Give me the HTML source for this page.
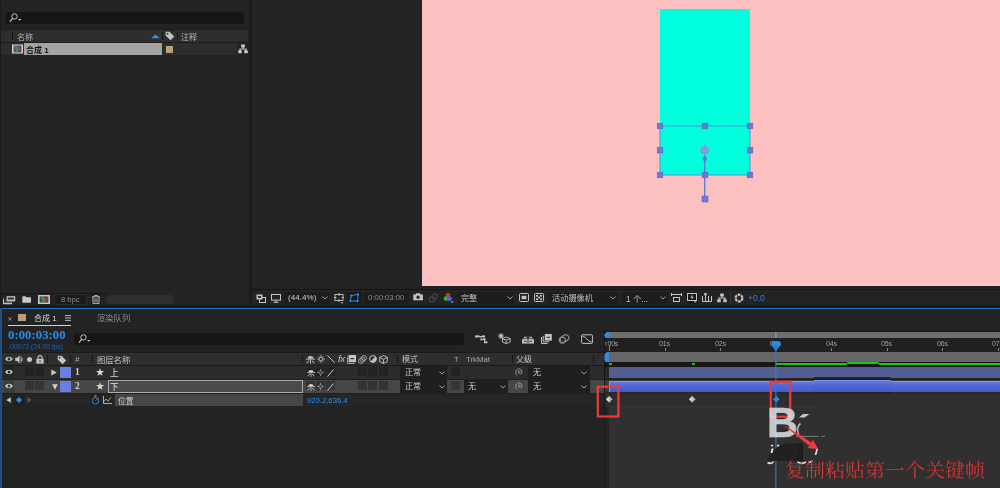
<!DOCTYPE html>
<html lang="zh-CN">
<head>
<meta charset="utf-8">
<title>After Effects</title>
<style>
html,body{margin:0;padding:0;}
body{width:1000px;height:488px;overflow:hidden;background:#232323;position:relative;
 font-family:"Liberation Sans","Noto Sans CJK SC",sans-serif;color:#bdbdbd;font-size:8.3px;}
.a{position:absolute;}
.t{position:absolute;white-space:nowrap;line-height:12px;height:12px;will-change:transform;}
.box{position:absolute;background:#1d1d1d;border-radius:2px;}
svg{position:absolute;overflow:visible;}
.sep{position:absolute;width:1px;background:#161616;}
.ruler{top:338px;font-size:7px;color:#a0a0a0;letter-spacing:-0.200px;}
.tick{top:348px;width:1px;height:3px;background:#858585;}
</style>
</head>
<body>

<!-- ===================== PROJECT PANEL ===================== -->
<div class="a" id="proj" style="left:0;top:0;width:248px;height:306px;background:#232323;"></div>
<div class="a" style="left:0;top:0;width:1px;height:306px;background:#1b1b1b;"></div>
<!-- search -->
<div class="box" style="left:6px;top:12px;width:238px;height:12px;background:#161616;"></div>
<svg style="left:9px;top:13px" width="14" height="10" viewBox="0 0 14 10"><circle cx="5.500" cy="3.400" r="2.700" fill="none" stroke="#c8c8c8" stroke-width="1"/><path d="M3.600 5.400L0.900 8.600" stroke="#c8c8c8" stroke-width="1.200"/><path d="M9 6h3.400l-1.700 1.700z" fill="#c8c8c8"/></svg>
<!-- header -->
<div class="a" style="left:0;top:29px;width:248px;height:1px;background:#1a1a1a;"></div>
<div class="a" style="left:1px;top:30px;width:247px;height:12px;background:#2e2e2e;"></div>
<div class="a" style="left:0;top:42px;width:248px;height:1px;background:#1c1c1c;"></div>
<div class="sep" style="left:12px;top:32px;height:8px;"></div>
<div class="sep" style="left:162px;top:32px;height:8px;"></div>
<div class="sep" style="left:177px;top:32px;height:8px;"></div>
<div class="t" style="left:17px;top:31.5px;font-size:8px;color:#b4b4b4;">名称</div>
<svg style="left:151px;top:34px" width="9" height="5" viewBox="0 0 9 5"><path d="M0 4.2L4.5 0.4L9 4.2z" fill="#2d8ceb"/></svg>
<svg style="left:165px;top:31px" width="10" height="10" viewBox="0 0 10 10"><path d="M0.6 0.8h3.8l4.8 4.8l-3.6 3.6l-5-4.8z" fill="#c4c4c4"/><circle cx="2.5" cy="2.7" r="0.9" fill="#2e2e2e"/></svg>
<div class="t" style="left:181px;top:31.5px;font-size:8px;color:#b4b4b4;">注释</div>
<!-- row -->
<div class="a" style="left:1px;top:43px;width:236px;height:12px;background:#2d2d2d;"></div>
<div class="a" style="left:24px;top:43px;width:138px;height:12px;background:#a3a3a3;"></div>
<svg style="left:12px;top:44px" width="11" height="10" viewBox="0 0 11 10"><rect x="0" y="0.5" width="11" height="9" fill="#cfcfcf"/><rect x="1.6" y="1.6" width="7.8" height="6.8" fill="#4a4a4a"/><circle cx="4.2" cy="3.6" r="1.6" fill="#3b7be0"/><circle cx="7" cy="4.6" r="1.6" fill="#d83030"/><circle cx="5" cy="6.4" r="1.6" fill="#2da040"/></svg>
<div class="t" style="left:26px;top:44.5px;font-size:8px;color:#111;font-weight:bold;">合成 1</div>
<div class="a" style="left:166.200px;top:46px;width:6.900px;height:6.700px;background:#baa17c;"></div>
<svg style="left:238px;top:44px" width="10" height="10" viewBox="0 0 10 10"><g fill="#d0d0d0"><rect x="3.2" y="0.5" width="3.6" height="3"/><rect x="0.3" y="6.2" width="3.4" height="3"/><rect x="6.3" y="6.2" width="3.4" height="3"/><rect x="4.6" y="3" width="0.9" height="2.2"/><rect x="1.6" y="4.6" width="6.8" height="0.9"/><rect x="1.6" y="4.6" width="0.9" height="2"/><rect x="7.5" y="4.6" width="0.9" height="2"/></g></svg>
<!-- footer -->
<div class="a" style="left:0;top:293px;width:105px;height:1px;background:#161616;"></div>
<div class="box" style="left:54px;top:294px;width:33px;height:11px;background:#1b1b1b;border:1px solid #2c2c2c;box-sizing:border-box;"></div>
<div class="t" style="left:61.300px;top:293.5px;font-size:7.600px;color:#868c94;">8 bpc</div>
<div class="a" style="left:106px;top:295px;width:68px;height:9px;border-radius:5px;background:#2f2f2f;"></div>

<!-- ===================== DIVIDER + VIEWER ===================== -->
<div class="a" style="left:249px;top:0;width:3px;height:306px;background:#1b1b1b;"></div>
<div class="a" style="left:252px;top:0;width:748px;height:288px;background:#232323;"></div>
<div class="a" id="pink" style="left:422px;top:0;width:578px;height:286px;background:#fdc0c0;"></div>
<div class="a" id="cyan" style="left:660px;top:9px;width:89.5px;height:166px;background:#00ffdc;"></div>
<svg style="left:640px;top:110px" width="130" height="100" viewBox="640 110 130 100">
 <g stroke="#5f76d8" stroke-width="0.800" fill="none"><rect x="660" y="126" width="90" height="49"/><path d="M704.700 153V199" stroke-width="1.300"/></g>
 <g fill="#6c79d8" stroke="#5560b8" stroke-width="0.5">
  <rect x="657.2" y="123.2" width="5.6" height="5.6"/><rect x="702.2" y="123.2" width="5.6" height="5.6"/><rect x="747.2" y="123.2" width="5.6" height="5.6"/>
  <rect x="657.2" y="147.4" width="5.6" height="5.6"/><rect x="747.2" y="147.4" width="5.6" height="5.6"/>
  <rect x="657.2" y="172.2" width="5.6" height="5.6"/><rect x="702.2" y="172.2" width="5.6" height="5.6"/><rect x="747.2" y="172.2" width="5.6" height="5.6"/>
  <rect x="702" y="196" width="6" height="6"/>
  <circle cx="704.700" cy="158.800" r="1.900"/>
 </g>
 <g stroke="#9090d8" fill="none"><circle cx="704.700" cy="150.200" r="3" stroke-width="1.900"/><path d="M704.700 144.600v11.200M699.100 150.200h11.200" stroke-width="1"/></g>
</svg>

<!-- viewer bottom bar -->
<div class="a" style="left:252px;top:288.500px;width:748px;height:1px;background:#151515;"></div>

<div class="a" style="left:0;top:305.400px;width:1000px;height:3px;background:#191919;"></div>
<div class="a" style="left:0;top:308px;width:1000px;height:1.600px;background:#2474c4;"></div>


<!-- project footer icons -->
<svg style="left:3px;top:295.500px" width="13" height="9" viewBox="0 0 13 9"><rect x="3.600" y="0.200" width="8.600" height="5.200" fill="#c4c4c4"/><rect x="4.800" y="1.400" width="6.200" height="2.200" fill="#3a3a3a"/><path d="M0.600 2.600v5h8.400" fill="none" stroke="#c4c4c4" stroke-width="1.100"/><path d="M2 6.200h7.500" stroke="#8a8a8a" stroke-width="0.800"/></svg>
<svg style="left:22px;top:295.500px" width="9.500" height="7" viewBox="0 0 10 8"><path d="M0 0.300h3.600l0.800 1.200H9.800V7.800H0z" fill="#c8c8c8"/></svg>
<svg style="left:38px;top:295px" width="12" height="9" viewBox="0 0 12 9"><rect x="0" y="0" width="12" height="9" fill="#c8c8c8"/><rect x="1.6" y="1.4" width="8.8" height="6.2" fill="#4a4a4a"/><circle cx="4.8" cy="3.4" r="1.6" fill="#3b7be0"/><circle cx="7.4" cy="4.4" r="1.6" fill="#d83030"/><circle cx="5.4" cy="6" r="1.6" fill="#2da040"/></svg>
<svg style="left:92px;top:295px" width="8" height="9" viewBox="0 0 8 9"><g fill="none" stroke="#c4c4c4" stroke-width="0.9"><path d="M0 1.8h8M2.6 1.6V0.5h2.8v1.1M1 2v6.4h6V2M3 3.4v3.8M5 3.4v3.8"/></g></svg>

<!-- viewer bar controls -->
<svg style="left:256px;top:294px" width="10" height="9" viewBox="0 0 10 9"><rect x="0.5" y="0.5" width="6" height="5" fill="#c4c4c4"/><rect x="3.5" y="3.5" width="6" height="5" fill="none" stroke="#c4c4c4"/><rect x="2" y="2" width="3" height="2" fill="#333"/></svg>
<svg style="left:271px;top:294px" width="10" height="9" viewBox="0 0 10 9"><rect x="0.5" y="0.5" width="9" height="5.6" fill="none" stroke="#c4c4c4"/><path d="M5 6v2M2.5 8.3h5" stroke="#c4c4c4" stroke-width="1"/></svg>
<div class="box" style="left:284px;top:292px;width:46px;height:12px;"></div>
<div class="t" style="left:288px;top:292px;font-size:8.100px;color:#cacaca;">(44.4%)</div>
<svg style="left:322px;top:296px" width="6" height="4" viewBox="0 0 6 4"><path d="M0.4 0.5L3 3L5.6 0.5" fill="none" stroke="#b0b0b0" stroke-width="0.9"/></svg>
<svg style="left:334px;top:293px" width="10" height="11" viewBox="0 0 10 11"><g fill="none" stroke="#c4c4c4" stroke-width="0.9"><rect x="1" y="1.5" width="8" height="6"/><path d="M5 0v3M5 6v3M0 4.5h2.5M7.5 4.5H10"/></g><path d="M6.5 9.2h3l-1.5 1.5z" fill="#c4c4c4"/></svg>
<div class="box" style="left:348px;top:292px;width:13px;height:12px;background:#181818;"></div>
<svg style="left:349px;top:293px" width="11" height="10" viewBox="0 0 11 10"><path d="M2.2 2.6L9 1.4L8.6 8H1.4z" fill="none" stroke="#2d8ceb" stroke-width="1"/><g fill="#2d8ceb"><rect x="1.2" y="1.6" width="2" height="2"/><rect x="8" y="0.4" width="2" height="2"/><rect x="7.6" y="7" width="2" height="2"/><rect x="0.4" y="7" width="2" height="2"/></g></svg>
<div class="box" style="left:364px;top:292px;width:45px;height:12px;"></div>
<div class="t" style="left:368px;top:292px;font-size:7.700px;color:#8c8c8c;">0:00:03:00</div>
<svg style="left:412.800px;top:293.400px" width="10.200" height="7.600" viewBox="0 0 11 8"><path d="M0.3 1.6h2.4l0.9-1.3h3.8l0.9 1.3h2.4V7.8H0.3z" fill="#c4c4c4"/><circle cx="5.5" cy="4.5" r="1.8" fill="#2a2a2a"/></svg>
<svg style="left:428px;top:293px" width="11" height="10" viewBox="0 0 11 10"><g fill="none" stroke="#444" stroke-width="1.2"><circle cx="6.8" cy="3.4" r="2.6"/><circle cx="3.8" cy="6.4" r="2.6"/></g></svg>
<svg style="left:443px;top:292px" width="11" height="12" viewBox="0 0 11 12"><circle cx="5" cy="3.4" r="2.3" fill="#e03030"/><circle cx="3" cy="6.6" r="2.3" fill="#30b040"/><circle cx="6.6" cy="6.8" r="2.3" fill="#3b6be8"/><path d="M7.6 9.6h3l-1.5 1.5z" fill="#c4c4c4"/></svg>
<div class="box" style="left:457px;top:292px;width:57px;height:12px;"></div>
<div class="t" style="left:461px;top:293px;font-size:8px;color:#c0c0c0;">完整</div>
<svg style="left:507px;top:296px" width="6" height="4" viewBox="0 0 6 4"><path d="M0.4 0.5L3 3L5.6 0.5" fill="none" stroke="#b0b0b0" stroke-width="0.9"/></svg>
<svg style="left:519px;top:293px" width="10" height="9" viewBox="0 0 10 9"><rect x="0.5" y="0.5" width="9" height="8" rx="1" fill="none" stroke="#c4c4c4"/><rect x="2.6" y="2.8" width="4.8" height="3.4" fill="#c4c4c4"/></svg>
<svg style="left:534px;top:293px" width="10" height="9" viewBox="0 0 10 9"><rect x="0.5" y="0.5" width="9" height="8" rx="1" fill="none" stroke="#c4c4c4"/><g fill="#c4c4c4"><rect x="2" y="2" width="2" height="1.7"/><rect x="6" y="2" width="2" height="1.7"/><rect x="4" y="3.7" width="2" height="1.7"/><rect x="2" y="5.4" width="2" height="1.7"/><rect x="6" y="5.4" width="2" height="1.7"/></g></svg>
<div class="box" style="left:548px;top:292px;width:70px;height:12px;"></div>
<div class="t" style="left:552px;top:293px;font-size:8.2px;color:#c0c0c0;">活动摄像机</div>
<svg style="left:610px;top:296px" width="6" height="4" viewBox="0 0 6 4"><path d="M0.4 0.5L3 3L5.6 0.5" fill="none" stroke="#b0b0b0" stroke-width="0.9"/></svg>
<div class="box" style="left:622px;top:292px;width:46px;height:12px;"></div>
<div class="t" style="left:626px;top:292.600px;font-size:8.3px;color:#c0c0c0;">1 个...</div>
<svg style="left:660px;top:296px" width="6" height="4" viewBox="0 0 6 4"><path d="M0.4 0.5L3 3L5.6 0.5" fill="none" stroke="#b0b0b0" stroke-width="0.9"/></svg>
<svg style="left:671px;top:293px" width="11" height="9" viewBox="0 0 11 9"><g fill="none" stroke="#c4c4c4" stroke-width="1"><path d="M0.5 0v3M10.5 0v3M0.5 1.5h10"/><rect x="2.5" y="4.5" width="6" height="4"/></g></svg>
<div class="box" style="left:686px;top:292px;width:12px;height:12px;background:#1b1b1b;"></div>
<svg style="left:687px;top:293px" width="10" height="10" viewBox="0 0 10 10"><rect x="0.5" y="0.5" width="9" height="7" fill="none" stroke="#c4c4c4"/><path d="M5.6 1.6L3.4 4.6h1.6L4.2 7l2.6-3.2H5.2z" fill="#c4c4c4"/><path d="M6.6 8.2h3l-1.5 1.5z" fill="#c4c4c4"/></svg>
<svg style="left:702px;top:293px" width="10" height="9" viewBox="0 0 10 9"><g fill="none" stroke="#c4c4c4" stroke-width="1"><path d="M0.5 3v5.5h9V3M3.5 1.5v7M6.5 3v5.5"/></g><rect x="2.3" y="0" width="2.4" height="2.4" fill="#c4c4c4"/></svg>
<svg style="left:717px;top:293px" width="10" height="10" viewBox="0 0 10 10"><g fill="#c8c8c8"><rect x="3.2" y="0.5" width="3.6" height="3"/><rect x="0.3" y="6.2" width="3.4" height="3"/><rect x="6.3" y="6.2" width="3.4" height="3"/><rect x="4.6" y="3" width="0.9" height="2.2"/><rect x="1.6" y="4.6" width="6.8" height="0.9"/><rect x="1.6" y="4.6" width="0.9" height="2"/><rect x="7.5" y="4.6" width="0.9" height="2"/></g></svg>
<div class="sep" style="left:730px;top:291px;height:13px;background:#333;"></div>
<svg style="left:734px;top:293px" width="10" height="10" viewBox="0 0 10 10"><circle cx="5" cy="5" r="3.4" fill="none" stroke="#c4c4c4" stroke-width="2.2" stroke-dasharray="2.8 0.75"/></svg>
<div class="t" style="left:748px;top:292px;font-size:8.5px;color:#2d7fd8;">+0.0</div>

<!-- ===================== TIMELINE PANEL ===================== -->
<div class="a" id="tl" style="left:0;top:309px;width:1000px;height:179px;background:#232323;"></div>
<div class="a" style="left:0;top:308px;width:2px;height:180px;background:#1f4f86;"></div>


<!-- tab row -->
<svg style="left:8px;top:316.500px" width="4" height="4" viewBox="0 0 5 5"><path d="M0.4 0.4L4.4 4.4M4.4 0.4L0.4 4.4" stroke="#9a9a9a" stroke-width="1.100"/></svg>
<div class="a" style="left:18.400px;top:313.700px;width:7.500px;height:7.300px;background:#b9a07b;"></div>
<div class="t" style="left:34px;top:313px;font-size:8px;color:#d6d6d6;">合成 1</div>
<svg style="left:65px;top:315px" width="6" height="6" viewBox="0 0 6 6"><path d="M0 0.6h6M0 3h6M0 5.4h6" stroke="#c8c8c8" stroke-width="0.9"/></svg>
<div class="a" style="left:8px;top:325px;width:63px;height:1.4px;background:#d2d2d2;"></div>
<div class="t" style="left:97px;top:312.400px;font-size:8.3px;color:#8e8e8e;">渲染队列</div>
<!-- timecode -->
<div class="t" style="left:8px;top:329px;font-family:'Liberation Serif',serif;font-weight:bold;font-size:12.6px;color:#2d8ceb;letter-spacing:0.1px;">0:00:03:00</div>
<div class="t" style="left:9.5px;top:340.5px;font-size:7.4px;letter-spacing:-0.3px;color:#1e5fa8;">00072 (24.00 fps)</div>
<!-- search -->
<div class="box" style="left:74px;top:333px;width:390px;height:12px;background:#161616;"></div>
<svg style="left:78px;top:334px" width="14" height="10" viewBox="0 0 14 10"><circle cx="5.500" cy="3.400" r="2.700" fill="none" stroke="#c8c8c8" stroke-width="1"/><path d="M3.600 5.400L0.900 8.600" stroke="#c8c8c8" stroke-width="1.200"/><path d="M9 6h3.400l-1.700 1.700z" fill="#c8c8c8"/></svg>
<!-- tool icons -->
<svg style="left:475px;top:335px" width="13" height="9" viewBox="0 0 13 9"><g fill="#c4c4c4"><rect x="0" y="0.4" width="4.6" height="2"/><rect x="7" y="0.4" width="3" height="2"/><rect x="4" y="1" width="4" height="0.9"/><rect x="5.6" y="1" width="0.9" height="4.6"/><rect x="5.6" y="4" width="3" height="0.9"/><rect x="8" y="3.3" width="2.6" height="2"/><rect x="9" y="5" width="0.9" height="2.4"/><rect x="9" y="6.4" width="3.4" height="1.8"/></g></svg>
<svg style="left:498px;top:333px" width="13" height="11" viewBox="0 0 13 11"><g stroke="#c4c4c4" fill="none" stroke-width="0.9"><path d="M3 0v6M0 3h6M0.9 0.9l4.2 4.2M5.1 0.9L0.9 5.1"/><path d="M8.2 4L12.2 5.6V9L8.2 10.6L4.4 9V5.6zM4.4 5.6L8.2 7.2L12.2 5.6M8.2 7.2v3.4"/></g><circle cx="3" cy="3" r="1.5" fill="#c4c4c4"/></svg>
<svg style="left:521.5px;top:335px" width="12" height="9" viewBox="0 0 12 9"><g fill="#bdbdbd"><path d="M1 3.6C2.5 0.4 9.5 0.4 11 3.6z"/><rect x="0" y="4.2" width="12" height="4.4"/></g><g stroke="#2a2a2a" stroke-width="0.8"><path d="M6 1.4v7M4 2.8l2-1.6l2 1.6M2 6.4h3M7 6.4h3"/></g></svg>
<svg style="left:540.5px;top:334px" width="11" height="10" viewBox="0 0 11 10"><g fill="none" stroke="#c4c4c4" stroke-width="1"><path d="M0.5 3v6.5h6"/><path d="M2.2 1.8v6h6"/></g><rect x="3.8" y="0" width="7" height="6.6" fill="#c4c4c4"/><rect x="5.6" y="2.8" width="3.4" height="1" fill="#2a2a2a"/></svg>
<svg style="left:558px;top:334px" width="12" height="10" viewBox="0 0 12 10"><g fill="none" stroke="#8c8c8c" stroke-width="1.1" transform="rotate(-35 6 5)"><rect x="0.8" y="2" width="10.4" height="6" rx="3"/><circle cx="4.6" cy="5" r="2.6"/></g></svg>
<svg style="left:581px;top:334px" width="12" height="10" viewBox="0 0 12 10"><rect x="0.6" y="0.8" width="10.8" height="8.6" rx="0.8" fill="none" stroke="#c4c4c4" stroke-width="1"/><path d="M1.4 2.2C6 2.2 6 8 10.6 8" fill="none" stroke="#c4c4c4" stroke-width="0.9"/></svg>

<!-- column header -->
<div class="a" style="left:2px;top:352px;width:602px;height:1px;background:#1a1a1a;"></div>
<div class="a" style="left:2px;top:353px;width:602px;height:12px;background:#2e2e2e;"></div>
<div class="a" style="left:2px;top:365px;width:602px;height:1px;background:#1a1a1a;"></div>
<!-- header icons -->
<svg style="left:5px;top:355px" width="8" height="8" viewBox="0 0 8 8"><path d="M0.2 4C2 1 6 1 7.8 4C6 7 2 7 0.2 4z" fill="#c4c4c4"/><circle cx="4" cy="4" r="1.5" fill="#2e2e2e"/></svg>
<svg style="left:15px;top:355px" width="9" height="9" viewBox="0 0 9 9"><path d="M0.2 2.8h2L4.6 0.4v8L2.2 6h-2z" fill="#c4c4c4"/><path d="M5.6 1.2a4 4 0 010 6.4M5.4 2.8a2 2 0 010 3.2" fill="none" stroke="#c4c4c4" stroke-width="0.9"/></svg>
<div class="a" style="left:27px;top:357px;width:5px;height:5px;border-radius:50%;background:#c4c4c4;"></div>
<svg style="left:36px;top:354.5px" width="8" height="9" viewBox="0 0 8 9"><rect x="0.3" y="3.8" width="7.4" height="4.8" fill="#c4c4c4"/><path d="M2 4V2.6a2 2 0 014 0V4" fill="none" stroke="#c4c4c4" stroke-width="1.1"/><rect x="3.5" y="5.2" width="1" height="2" fill="#2e2e2e"/></svg>
<div class="sep" style="left:47px;top:355px;height:8px;"></div>
<svg style="left:57px;top:354.5px" width="10" height="10" viewBox="0 0 10 10"><path d="M0.6 0.8h3.8l4.8 4.8l-3.6 3.6l-5-4.8z" fill="#c4c4c4"/><circle cx="2.5" cy="2.7" r="0.9" fill="#2e2e2e"/></svg>
<div class="sep" style="left:70px;top:355px;height:8px;"></div>
<div class="t" style="left:74.5px;top:353.5px;font-size:8px;color:#a8a8a8;">#</div>
<div class="sep" style="left:92px;top:355px;height:8px;"></div>
<div class="t" style="left:97px;top:353.5px;font-size:8.3px;color:#c0c0c0;">图层名称</div>
<div class="sep" style="left:302px;top:355px;height:8px;"></div>
<div class="sep" style="left:397px;top:355px;height:8px;"></div>
<div class="t" style="left:401.700px;top:353.900px;font-size:8px;color:#c0c0c0;">模式</div>
<div class="t" style="left:454px;top:353.800px;font-size:7.5px;color:#a8a8a8;">T</div>
<div class="t" style="left:466px;top:353.800px;font-size:7.8px;color:#a8a8a8;">TrkMat</div>
<div class="sep" style="left:512px;top:355px;height:8px;"></div>
<div class="t" style="left:516px;top:353.900px;font-size:8px;color:#c0c0c0;">父级</div>
<div class="sep" style="left:593px;top:355px;height:8px;"></div>


<!-- header switch icons -->
<svg style="left:306px;top:354.500px" width="9" height="9" viewBox="0 0 8 8"><g fill="#c4c4c4"><path d="M1.400 3C1.400 0.300 6.600 0.300 6.600 3z"/><rect x="0" y="3.300" width="8" height="0.800"/><rect x="3.600" y="3" width="0.800" height="4.800"/><path d="M0.300 6.900L2.600 4.800l0.500 0.500L0.800 7.500zM7.700 6.900L5.400 4.800l-0.500 0.500L7.200 7.500z"/></g></svg>
<svg style="left:317px;top:355px" width="8" height="8" viewBox="0 0 8 8"><circle cx="4" cy="4" r="1.900" fill="none" stroke="#c4c4c4" stroke-width="0.900"/><path d="M4 0v2M4 6v2M0 4h2M6 4h2M1.400 1.400l1.200 1.200M6.600 1.400L5.400 2.600M1.400 6.600l1.200-1.200M6.600 6.600L5.400 5.400" stroke="#c4c4c4" stroke-width="0.700"/></svg>
<svg style="left:327px;top:355px" width="8" height="8" viewBox="0 0 8 8"><path d="M0.400 0.400L7.600 7.600" stroke="#c4c4c4" stroke-width="1"/></svg>
<div class="t" style="left:337.500px;top:352.500px;font-size:9.500px;font-style:italic;color:#c4c4c4;letter-spacing:-0.500px;">fx</div>
<svg style="left:347px;top:354.500px" width="9" height="9" viewBox="0 0 9 9"><path d="M0.500 1.600v6.900h6.900" fill="none" stroke="#9a9a9a" stroke-width="1"/><rect x="1.600" y="0" width="7.400" height="7.200" fill="#c4c4c4"/><rect x="3.600" y="3" width="3.400" height="1.200" fill="#2e2e2e"/></svg>
<svg style="left:358px;top:354.500px" width="9" height="9" viewBox="0 0 9 9"><g fill="none" stroke="#9c9c9c" stroke-width="1"><circle cx="6" cy="3" r="2.500"/><circle cx="4.500" cy="4.500" r="2.500"/><circle cx="3" cy="6" r="2.500"/></g></svg>
<svg style="left:369px;top:355px" width="8" height="8" viewBox="0 0 8 8"><circle cx="4" cy="4" r="3.400" fill="none" stroke="#c4c4c4" stroke-width="1"/><path d="M6.400 1.600A3.400 3.400 0 011.600 6.400z" fill="#c4c4c4"/></svg>
<svg style="left:379px;top:354.500px" width="9" height="9" viewBox="0 0 9 9"><path d="M4.500 0.500L8.300 2.400V6.600L4.500 8.500L0.700 6.600V2.400zM0.700 2.400L4.500 4.300L8.300 2.400M4.500 4.300V8.500" fill="none" stroke="#c4c4c4" stroke-width="0.900"/></svg>

<!-- rows -->
<div class="a" style="left:2px;top:366px;width:602px;height:13px;background:#2c2c2c;"></div>
<div class="a" style="left:2px;top:379px;width:602px;height:1px;background:#1f1f1f;"></div>
<div class="a" style="left:2px;top:380px;width:602px;height:13px;background:#464646;"></div>
<div class="a" style="left:2px;top:393px;width:602px;height:1px;background:#1f1f1f;"></div>
<div class="a" style="left:2px;top:394px;width:602px;height:12px;background:#262626;"></div>
<div class="a" style="left:115px;top:394px;width:188px;height:12px;background:#464646;"></div>

<!-- row content -->
<div class="a" style="left:4px;top:366px;width:9.5px;height:12px;background:#252525;"></div><svg style="left:5px;top:368px" width="8" height="8" viewBox="0 0 8 8"><path d="M0.2 4C2 1 6 1 7.8 4C6 7 2 7 0.2 4z" fill="#d0d0d0"/><circle cx="4" cy="4" r="1.5" fill="#222"/></svg><div class="a" style="left:25px;top:367px;width:9px;height:9px;background:#222;"></div><div class="a" style="left:35px;top:367px;width:9px;height:9px;background:#222;"></div><svg style="left:51px;top:369px" width="6" height="7" viewBox="0 0 6 7"><path d="M0.3 0.4L5.8 3.5L0.3 6.600z" fill="#c8c8c8"/></svg><div class="a" style="left:60px;top:367px;width:10.5px;height:10.500px;background:#6b7fe2;"></div><div class="t" style="left:75px;top:366px;font-family:'Liberation Serif',serif;font-size:9.500px;color:#cdcdcd;font-weight:bold;">1</div><svg style="left:96.300px;top:368.400px" width="8.200" height="8.200" viewBox="0 0 10 10"><path d="M5 0.2L6.3 3.6L9.9 3.8L7.1 6.1L8 9.6L5 7.6L2 9.6L2.9 6.1L0.1 3.8L3.7 3.6z" fill="#d4d4d4"/></svg><div class="t" style="left:110px;top:367.300px;font-size:8.6px;color:#dcdcdc;">上</div><div class="a" style="left:306px;top:367px;width:9px;height:9px;background:#232323;"></div><div class="a" style="left:316px;top:367px;width:9px;height:9px;background:#232323;"></div><div class="a" style="left:326px;top:367px;width:9px;height:9px;background:#232323;"></div><svg style="left:306.5px;top:368.5px" width="8" height="8" viewBox="0 0 8 8"><g fill="#d0d0d0"><path d="M1.400 3C1.400 0.300 6.600 0.300 6.600 3z"/><rect x="0" y="3.300" width="8" height="0.800"/><rect x="3.600" y="3" width="0.800" height="4.800"/><path d="M0.300 6.900L2.600 4.800l0.500 0.500L0.800 7.500zM7.700 6.900L5.400 4.800l-0.500 0.500L7.200 7.500z"/></g></svg><svg style="left:317px;top:369px" width="7" height="7" viewBox="0 0 7 7"><circle cx="3.5" cy="3.5" r="1.600" fill="none" stroke="#a8a8a8" stroke-width="0.700"/><path d="M3.5 0v1.900M3.500 5.100V7M0 3.500h1.900M5.100 3.500H7" stroke="#a8a8a8" stroke-width="0.700"/></svg><svg style="left:327px;top:368.5px" width="7" height="8" viewBox="0 0 7 8"><path d="M0.5 7.5L6.5 0.5" stroke="#d0d0d0" stroke-width="1"/></svg><div class="a" style="left:357.5px;top:367px;width:9px;height:9px;background:#232323;"></div><div class="a" style="left:368px;top:367px;width:9px;height:9px;background:#232323;"></div><div class="a" style="left:378.5px;top:367px;width:9px;height:9px;background:#232323;"></div><div class="a" style="left:400px;top:366px;width:47px;height:13px;background:#1f1f1f;"></div><div class="t" style="left:404.500px;top:366.5px;font-size:8px;color:#d0d0d0;">正常</div><svg style="left:439px;top:371px" width="6" height="4" viewBox="0 0 6 4"><path d="M0.4 0.5L3 3L5.6 0.5" fill="none" stroke="#b0b0b0" stroke-width="0.9"/></svg><div class="a" style="left:451px;top:367px;width:9px;height:9px;background:#222;"></div><div class="a" style="left:528px;top:366px;width:62px;height:13px;background:#1f1f1f;"></div><div class="t" style="left:533px;top:366.5px;font-size:8px;color:#d0d0d0;">无</div><svg style="left:581px;top:371px" width="6" height="4" viewBox="0 0 6 4"><path d="M0.4 0.5L3 3L5.6 0.5" fill="none" stroke="#b0b0b0" stroke-width="0.9"/></svg><svg style="left:515px;top:368px" width="9" height="9" viewBox="0 0 9 9"><path d="M4.6 4.6a0.9 0.9 0 10-1.300-0.600a2 2 0 003.200 1.300a3 3 0 00-3.600-4.300a3.800 3.800 0 00-0.800 6.400" fill="none" stroke="#9a9a9a" stroke-width="0.9"/></svg><div class="a" style="left:4px;top:380px;width:9.5px;height:12.5px;background:#3c3c3c;"></div><svg style="left:5px;top:382px" width="8" height="8" viewBox="0 0 8 8"><path d="M0.2 4C2 1 6 1 7.8 4C6 7 2 7 0.2 4z" fill="#d0d0d0"/><circle cx="4" cy="4" r="1.5" fill="#333"/></svg><div class="a" style="left:25px;top:381px;width:9px;height:9px;background:#343434;"></div><div class="a" style="left:35px;top:381px;width:9px;height:9px;background:#343434;"></div><svg style="left:51.500px;top:383.5px" width="6" height="6" viewBox="0 0 6 6"><path d="M0.200 0.300H5.800L3 5.800z" fill="#d0d0d0"/></svg><div class="a" style="left:60px;top:381px;width:10.5px;height:10.500px;background:#6b7fe2;"></div><div class="t" style="left:75px;top:380px;font-family:'Liberation Serif',serif;font-size:9.500px;color:#cdcdcd;font-weight:bold;">2</div><svg style="left:96.300px;top:382.400px" width="8.200" height="8.200" viewBox="0 0 10 10"><path d="M5 0.2L6.3 3.6L9.9 3.8L7.1 6.1L8 9.6L5 7.6L2 9.6L2.9 6.1L0.1 3.8L3.7 3.6z" fill="#d4d4d4"/></svg><div class="a" style="left:107.500px;top:380px;width:195px;height:12.500px;box-sizing:border-box;border:1px solid #adadad;background:#4a4a4a;"></div><div class="t" style="left:110px;top:381px;font-size:8.6px;color:#e6e6e6;">下</div><div class="a" style="left:306px;top:381px;width:9px;height:9px;background:#333;"></div><div class="a" style="left:316px;top:381px;width:9px;height:9px;background:#333;"></div><div class="a" style="left:326px;top:381px;width:9px;height:9px;background:#333;"></div><svg style="left:306.5px;top:382.5px" width="8" height="8" viewBox="0 0 8 8"><g fill="#d0d0d0"><path d="M1.400 3C1.400 0.300 6.600 0.300 6.600 3z"/><rect x="0" y="3.300" width="8" height="0.800"/><rect x="3.600" y="3" width="0.800" height="4.800"/><path d="M0.300 6.900L2.600 4.800l0.500 0.500L0.800 7.500zM7.700 6.900L5.400 4.800l-0.500 0.500L7.200 7.500z"/></g></svg><svg style="left:317px;top:383px" width="7" height="7" viewBox="0 0 7 7"><circle cx="3.5" cy="3.5" r="1.600" fill="none" stroke="#a8a8a8" stroke-width="0.700"/><path d="M3.5 0v1.900M3.500 5.100V7M0 3.500h1.900M5.100 3.500H7" stroke="#a8a8a8" stroke-width="0.700"/></svg><svg style="left:327px;top:382.5px" width="7" height="8" viewBox="0 0 7 8"><path d="M0.5 7.5L6.5 0.5" stroke="#d0d0d0" stroke-width="1"/></svg><div class="a" style="left:357.5px;top:381px;width:9px;height:9px;background:#333;"></div><div class="a" style="left:368px;top:381px;width:9px;height:9px;background:#333;"></div><div class="a" style="left:378.5px;top:381px;width:9px;height:9px;background:#333;"></div><div class="a" style="left:400px;top:380px;width:47px;height:13px;background:#1f1f1f;"></div><div class="t" style="left:404.500px;top:380.5px;font-size:8px;color:#d0d0d0;">正常</div><svg style="left:439px;top:385px" width="6" height="4" viewBox="0 0 6 4"><path d="M0.4 0.5L3 3L5.6 0.5" fill="none" stroke="#b0b0b0" stroke-width="0.9"/></svg><div class="a" style="left:451px;top:381px;width:9px;height:9px;background:#363636;"></div><div class="a" style="left:464px;top:380px;width:44px;height:13px;background:#1f1f1f;"></div><div class="t" style="left:468px;top:380.5px;font-size:8px;color:#d0d0d0;">无</div><svg style="left:500px;top:385px" width="6" height="4" viewBox="0 0 6 4"><path d="M0.4 0.5L3 3L5.6 0.5" fill="none" stroke="#b0b0b0" stroke-width="0.9"/></svg><div class="a" style="left:528px;top:380px;width:62px;height:13px;background:#1f1f1f;"></div><div class="t" style="left:533px;top:380.5px;font-size:8px;color:#d0d0d0;">无</div><svg style="left:581px;top:385px" width="6" height="4" viewBox="0 0 6 4"><path d="M0.4 0.5L3 3L5.6 0.5" fill="none" stroke="#b0b0b0" stroke-width="0.9"/></svg><svg style="left:515px;top:382px" width="9" height="9" viewBox="0 0 9 9"><path d="M4.6 4.6a0.9 0.9 0 10-1.300-0.600a2 2 0 003.200 1.300a3 3 0 00-3.600-4.300a3.800 3.800 0 00-0.800 6.400" fill="none" stroke="#9a9a9a" stroke-width="0.9"/></svg><svg style="left:6px;top:397px" width="5" height="6" viewBox="0 0 5 6"><path d="M4.800 0.200V5.800L0.200 3z" fill="#c8c8c8"/></svg><div class="a" style="left:14px;top:394px;width:9.500px;height:12px;background:#1f1f1f;"></div><svg style="left:16px;top:397px" width="6" height="6" viewBox="0 0 6 6"><path d="M3 0L6 3L3 6L0 3z" fill="#2d8ceb"/></svg><svg style="left:27px;top:397px" width="5" height="6" viewBox="0 0 5 6"><path d="M0.200 0.200V5.800L4.800 3z" fill="#555"/></svg><div class="a" style="left:90px;top:394px;width:10.500px;height:12px;background:#1f1f1f;"></div><svg style="left:91px;top:395px" width="9" height="10" viewBox="0 0 9 10"><circle cx="4.500" cy="5.800" r="3.300" fill="none" stroke="#2d8ceb" stroke-width="1"/><path d="M3.200 0.600h2.600M4.500 0.600v1.800M4.500 5.800L6.600 3.600" stroke="#2d8ceb" stroke-width="1" fill="none"/></svg><svg style="left:103px;top:396px" width="9" height="8" viewBox="0 0 9 8"><path d="M0.500 0V7.500H9" fill="none" stroke="#bdbdbd" stroke-width="0.9"/><path d="M1 5.500L3 3L5 5.200L8 1.200" fill="none" stroke="#bdbdbd" stroke-width="0.8"/></svg><div class="t" style="left:117.700px;top:395.5px;font-size:7.700px;color:#d0d0d0;">位置</div><div class="t" style="left:306.5px;top:394.5px;font-size:7.700px;color:#2d8ceb;">920.2,636.4</div>

<!-- ===================== TIME GRAPH ===================== -->
<div class="a" style="left:604px;top:330px;width:396px;height:158px;background:#1d1d1d;"></div>
<div class="a" style="left:604px;top:330px;width:1px;height:158px;background:#171717;"></div>
<!-- work area bar -->
<div class="a" style="left:608px;top:332px;width:392px;height:5.5px;background:#6e6e6e;"></div>
<svg style="left:604px;top:331.5px" width="5" height="6.500" viewBox="0 0 5 6.500"><path d="M5 0H3.400C1.600 0.600 0.300 2 0.300 3.250C0.300 4.500 1.600 5.900 3.400 6.500H5z" fill="#2d8ceb"/></svg>
<!-- ruler -->
<div class="a" style="left:605px;top:338px;width:395px;height:13.500px;background:#202020;"></div>
<div class="a" style="left:604.500px;top:338px;width:20px;height:12px;overflow:hidden;"><div class="t ruler" style="left:-2.800px;top:0;">0:00s</div></div>
<div class="t ruler" style="left:659px;">01s</div>
<div class="t ruler" style="left:714.5px;">02s</div>
<div class="t ruler" style="left:770px;">03s</div>
<div class="t ruler" style="left:825.5px;">04s</div>
<div class="t ruler" style="left:881px;">05s</div>
<div class="t ruler" style="left:936.5px;">06s</div>
<div class="t ruler" style="left:992px;">07s</div>
<div class="a tick" style="left:609px;top:346px;height:5px;"></div>
<div class="a tick" style="left:664.500px;"></div>
<div class="a tick" style="left:720px;"></div>
<div class="a tick" style="left:831px;"></div>
<div class="a tick" style="left:886.500px;"></div>
<div class="a tick" style="left:942px;"></div>
<div class="a tick" style="left:997.500px;"></div>
<!-- second bar -->
<div class="a" style="left:608px;top:352px;width:392px;height:10px;background:#666;"></div>
<svg style="left:604px;top:351.500px" width="5" height="11" viewBox="0 0 5 11"><path d="M5 0H3.600C1.800 0.400 0.500 1.800 0.500 3.200V7.800C0.500 9.200 1.800 10.600 3.600 11H5z" fill="#2d8ceb"/></svg>
<div class="a" style="left:605px;top:362px;width:395px;height:4.500px;background:#181818;"></div>
<div class="a" style="left:609px;top:363.300px;width:2.500px;height:1.800px;background:#14c814;"></div>
<div class="a" style="left:692px;top:363.300px;width:3px;height:1.800px;background:#14c814;"></div>
<div class="a" style="left:776px;top:363.300px;width:224px;height:1.800px;background:#14c814;"></div>
<!-- layer bars -->
<div class="a" style="left:605px;top:366.500px;width:395px;height:12.500px;background:#262626;"></div>
<div class="a" style="left:609px;top:366.600px;width:391px;height:11.200px;background:#525d91;"></div>
<div class="a" style="left:605px;top:377.800px;width:395px;height:1.700px;background:#272727;"></div>
<div class="a" style="left:605px;top:379.500px;width:395px;height:12.700px;background:#3b3b3b;"></div>
<div class="a" style="left:609px;top:381px;width:391px;height:11px;border-left:1px solid #8c9cea;box-sizing:border-box;background:linear-gradient(#93a4ee 0,#6378de 1.300px,#5166d6 5px,#4459cb 11px);"></div>
<div class="a" style="left:605px;top:392.200px;width:395px;height:1.800px;background:#282828;"></div>
<!-- property row + empty -->
<div class="a" style="left:605px;top:394px;width:395px;height:12px;background:#2d2d2d;"></div>
<div class="a" style="left:605px;top:406px;width:395px;height:1px;background:#363636;"></div>
<div class="a" style="left:605px;top:407px;width:4px;height:81px;background:#232323;"></div><div class="a" style="left:609px;top:407px;width:391px;height:81px;background:#303030;"></div>
<!-- keyframes -->
<svg style="left:606.3px;top:396.100px" width="6.600" height="6.600" viewBox="0 0 8 8"><path d="M4 0L8 4L4 8L0 4z" fill="#b4b4b4"/><path d="M4 0L4 8L0 4z" fill="#d2d2d2"/></svg>
<svg style="left:689.3px;top:396.100px" width="6.600" height="6.600" viewBox="0 0 8 8"><path d="M4 0L8 4L4 8L0 4z" fill="#b4b4b4"/><path d="M4 0L4 8L0 4z" fill="#d2d2d2"/></svg>
<svg style="left:772.7px;top:396.100px" width="6.600" height="6.600" viewBox="0 0 8 8"><path d="M4 0L8 4L4 8L0 4z" fill="#2d8ceb"/></svg>
<!-- playhead -->
<svg style="left:770px;top:332px" width="12" height="156" viewBox="0 0 12 156"><path d="M5.900 0V6" stroke="#5b9be4" stroke-width="1.400"/><path d="M5.900 18V156" stroke="#2d7fd6" stroke-width="1.100"/></svg>
<svg style="left:771px;top:340.600px" width="10" height="10.400" viewBox="0 0 10 10.400"><path d="M1.300 0.300H8.700L9.400 1V4L5 10.200L0.600 4V1z" fill="#2d8ceb"/><path d="M5 3.800V8" stroke="#1d5a9c" stroke-width="1"/></svg>
<!-- red boxes -->
<svg style="left:590px;top:380px" width="210" height="45" viewBox="590 380 210 45"><g fill="none" stroke="#f03838" stroke-width="2.200"><rect x="597.800" y="386.700" width="20.600" height="29.800"/><rect x="770.800" y="381.700" width="19.400" height="35"/></g></svg>

<!-- watermark remnants -->
<div class="a" style="left:815px;top:392.500px;width:185px;height:48px;background:linear-gradient(#2e2e2e 0,#2f2f2f 30px,#303030 48px);"></div>
<div class="a" style="left:814px;top:379px;width:77px;height:2px;background:#1c1c1c;"></div>
<div class="a" style="left:814px;top:380px;width:77px;height:11.500px;background:linear-gradient(#93a4ee 0,#6378de 1.300px,#5166d6 5px,#4459cb 11px);"></div>
<div class="a" style="left:814px;top:391.500px;width:77px;height:2px;background:#222;"></div>
<div class="a" style="left:814px;top:376.800px;width:77px;height:2.200px;background:#242424;"></div><div class="a" style="left:847px;top:363px;width:32px;height:2.300px;background:#181818;"></div><div class="a" style="left:847px;top:362.300px;width:32px;height:1.800px;background:#14c814;border-radius:1px;"></div>
<div class="t" id="wmB" style="left:766.700px;top:402.700px;height:40px;line-height:40px;font-size:42px;font-weight:bold;color:#eee;-webkit-text-stroke:0.600px #eee;opacity:0.800;transform:scaleX(1.020);transform-origin:0 0;">B</div>
<svg style="left:760px;top:400px" width="80" height="70" viewBox="760 400 80 70">
 <path d="M799 417.500L803 414H809.500L804.500 417.500z" fill="rgba(238,238,238,0.800)"/>
 <path d="M800.500 423.500C797 426 796.800 431 799 434.500" fill="none" stroke="rgba(238,238,238,0.700)" stroke-width="1.600"/>
 <path d="M796 436.400H818.500M821 436.400H825" stroke="rgba(238,238,238,0.500)" stroke-width="0.800"/>
 <path d="M767 461C770 451 778 443.500 792 443H803V461z" fill="#212121"/>
 <rect x="797.500" y="443" width="5.500" height="18" fill="#1d1d1d"/>
 <g fill="#e6e6e6"><rect x="771" y="444.800" width="2.200" height="1.600"/><rect x="777" y="444.800" width="2.200" height="1.600"/><path d="M771.500 448.500h2l-1 4.500h-1.800z"/><path d="M814.800 455L816.200 449h1.800l-1.600 6z"/></g>
 <g fill="none" stroke="#e6e6e6" stroke-width="1.600"><path d="M767.500 462.500C770 464 772.500 463.500 773.500 461.500"/><path d="M797.500 461.800C800 463.600 803.500 463.600 806 462"/><path d="M808.500 462.500L812.500 461.300"/></g>
</svg>
<!-- arrow -->
<svg style="left:780px;top:420px" width="44" height="34" viewBox="780 420 44 34"><path d="M785 426.200L786 426.200L811.500 442.500L809.500 446z" fill="#f43a3a"/><path d="M812.800 439.500L818.300 449.300L807.700 448L810.500 444.500z" fill="#f43a3a"/></svg>
<!-- caption -->
<div class="t" style="left:784.700px;top:455px;height:30px;line-height:30px;font-family:'Liberation Serif','Noto Serif CJK SC',serif;font-size:20px;font-weight:300;color:#e83636;transform:scaleY(0.930);transform-origin:0 26px;">复制粘贴第一个关键帧</div>

</body>
</html>
